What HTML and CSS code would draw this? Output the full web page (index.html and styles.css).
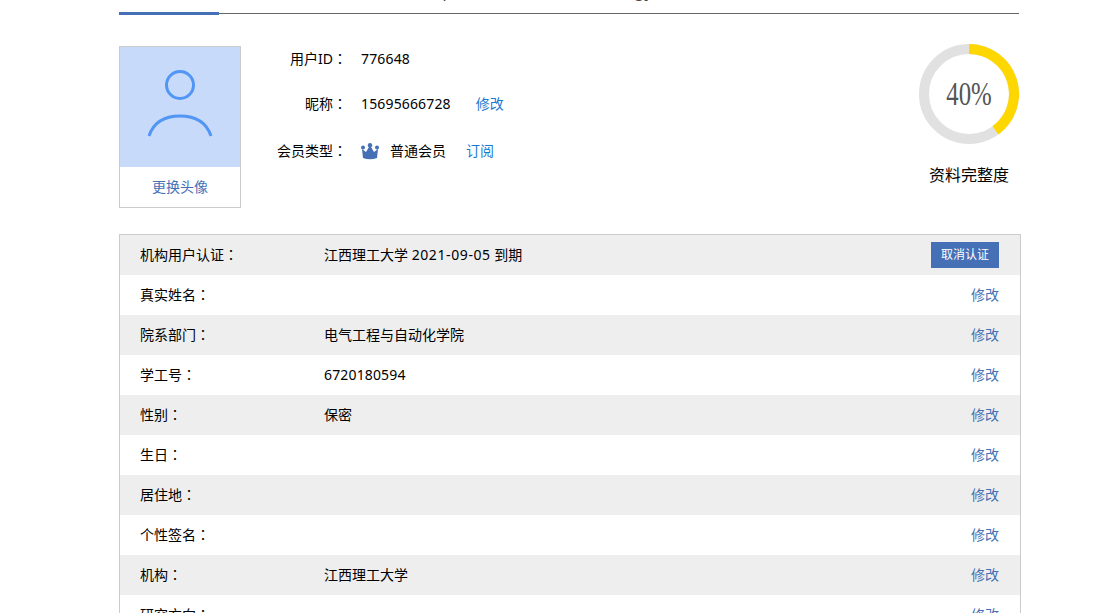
FILE: index.html
```html
<!DOCTYPE html>
<html lang="zh">
<head>
<meta charset="utf-8">
<title>个人资料</title>
<link rel="stylesheet" href="styles.css">
</head>
<body>
<div class="page">
  <nav class="tabs">
    <a class="tab active">个人资料</a>
    <a class="tab tab-setup">Setup</a>
    <a class="tab tab-energy">Energy</a>
  </nav>
  <section class="profile">
    <div class="avatar">
      <div class="avatar-pic">
        <svg width="122" height="120" viewBox="0 0 122 120" fill="none" stroke="#5196f5" stroke-width="3">
          <circle cx="61" cy="38" r="13.5"/>
          <path d="M30 89 C35 74 47 69 61 69 C75 69 87 74 92 89"/>
        </svg>
      </div>
      <a class="avatar-link">更换头像</a>
    </div>
    <div class="info">
      <div class="info-row r1"><span class="info-label">用户ID<span class="colon" lang="ja">：</span></span><span class="num">776648</span></div>
      <div class="info-row r2"><span class="info-label">昵称<span class="colon" lang="ja">：</span></span><span class="num">15695666728</span><a class="link l1">修改</a></div>
      <div class="info-row r3"><span class="info-label">会员类型<span class="colon" lang="ja">：</span></span>
        <svg class="crown" width="18" height="17" viewBox="0 0 18 17"><path fill="#4570b5" d="M1 6 L5 9 L8 4 h2 L13 9 L17 6 L16 15 Q9 17.5 2 15 Z"/><circle cx="2" cy="4.5" r="2" fill="#4570b5"/><circle cx="9" cy="2.2" r="2.2" fill="#4570b5"/><circle cx="16" cy="4.5" r="2" fill="#4570b5"/></svg>
        <span class="member">普通会员</span><a class="link l2">订阅</a></div>
    </div>
    <div class="progress">
      <div class="ring">
        <svg width="100" height="100" viewBox="0 0 100 100" fill="none" stroke-width="10">
          <circle cx="50" cy="50" r="45" stroke="#e1e1e1"/>
          <path d="M50 5 A45 45 0 0 1 76.45 86.41" stroke="#ffd700"/>
        </svg>
        <span class="ring-text">40%</span>
      </div>
      <div class="ring-label">资料完整度</div>
    </div>
  </section>
  <section class="table">
    <div class="row"><span class="key">机构用户认证<span class="colon" lang="ja">：</span></span><span class="val">江西理工大学 <span class="date">2021-09-05</span> 到期</span><a class="btn">取消认证</a></div>
    <div class="row"><span class="key">真实姓名<span class="colon" lang="ja">：</span></span><span class="val"></span><a class="edit">修改</a></div>
    <div class="row"><span class="key">院系部门<span class="colon" lang="ja">：</span></span><span class="val">电气工程与自动化学院</span><a class="edit">修改</a></div>
    <div class="row"><span class="key">学工号<span class="colon" lang="ja">：</span></span><span class="val num">6720180594</span><a class="edit">修改</a></div>
    <div class="row"><span class="key">性别<span class="colon" lang="ja">：</span></span><span class="val">保密</span><a class="edit">修改</a></div>
    <div class="row"><span class="key">生日<span class="colon" lang="ja">：</span></span><span class="val"></span><a class="edit">修改</a></div>
    <div class="row"><span class="key">居住地<span class="colon" lang="ja">：</span></span><span class="val"></span><a class="edit">修改</a></div>
    <div class="row"><span class="key">个性签名<span class="colon" lang="ja">：</span></span><span class="val"></span><a class="edit">修改</a></div>
    <div class="row"><span class="key">机构<span class="colon" lang="ja">：</span></span><span class="val">江西理工大学</span><a class="edit">修改</a></div>
    <div class="row"><span class="key">研究方向<span class="colon" lang="ja">：</span></span><span class="val"></span><a class="edit">修改</a></div>
  </section>
</div>
</body>
</html>
```
FILE: styles.css
```css
html, body { margin: 0; padding: 0; height: 613px; overflow: hidden; background: #fff; }
body { font-family: "Noto Sans", "Noto Sans CJK SC", sans-serif; font-size: 14px; line-height: 20px; color: #000; }
.page { width: 900px; margin-left: 119px; }
.colon { font-family: "Noto Sans CJK JP", sans-serif; line-height: 1; }
.num { letter-spacing: .15px; }
.date { letter-spacing: .6px; }
.tabs { display: flex; height: 13px; border-bottom: 1px solid #666; }
.tab { flex: none; margin-top: -19px; height: 32px; box-sizing: border-box; font-size: 16px; line-height: 20px; color: #444; white-space: nowrap; }
.tab.active { width: 100px; color: #4570b5; text-align: center; border-bottom: 3px solid #4570b5; height: 34px; margin-top: -19px; margin-bottom: -2px; }
.tab-setup { margin-left: 190px; }
.tab-energy { margin-left: 148px; }
.profile { display: flex; height: 220px; }
.avatar { width: 122px; height: 162px; margin-top: 32px; box-sizing: border-box; border: 1px solid #ccc; flex: none; display: flex; flex-direction: column; }
.avatar-pic { height: 120px; background: #c7daf9; overflow: hidden; }
.avatar-pic svg { display: block; margin-left: -1px; }
.avatar-link { height: 40px; line-height: 40px; text-align: center; color: #4570b5; }
.info { margin-top: 33px; flex: 1; }
.info-row { display: flex; align-items: baseline; height: 24px; line-height: 24px; }
.r2 { margin-top: 21px; }
.r3 { margin-top: 23px; }
.info-label { width: 106px; text-align: right; margin-right: 14px; flex: none; }
.crown { margin-right: 11px; flex: none; align-self: center; }
.link { color: #1a7ad0; }
.l1 { margin-left: 25px; }
.l2 { margin-left: 20px; }
.progress { width: 100px; flex: none; margin-top: 30px; display: flex; flex-direction: column; align-items: center; }
.ring { position: relative; width: 100px; height: 100px; }
.ring svg { display: block; }
.ring-text { position: absolute; inset: 0; display: flex; align-items: center; justify-content: center; font-family: "Liberation Serif", serif; font-size: 34px; color: #555; transform: scaleX(.73); }
.ring-label { margin-top: 19px; font-size: 16px; line-height: 24px; white-space: nowrap; }
.table { width: 902px; box-sizing: border-box; border: 1px solid #ccc; }
.row { display: flex; align-items: baseline; height: 40px; box-sizing: border-box; padding: 10px 21px 0 20px; }
.row:nth-child(odd) { background: #eee; }
.key { width: 184px; flex: none; }
.val { flex: 1; }
.edit { color: #4570b5; }
.btn { width: 68px; height: 26px; line-height: 26px; text-align: center; font-size: 12px; color: #fff; background: #4570b5; align-self: center; margin-top: -10px; }
```
